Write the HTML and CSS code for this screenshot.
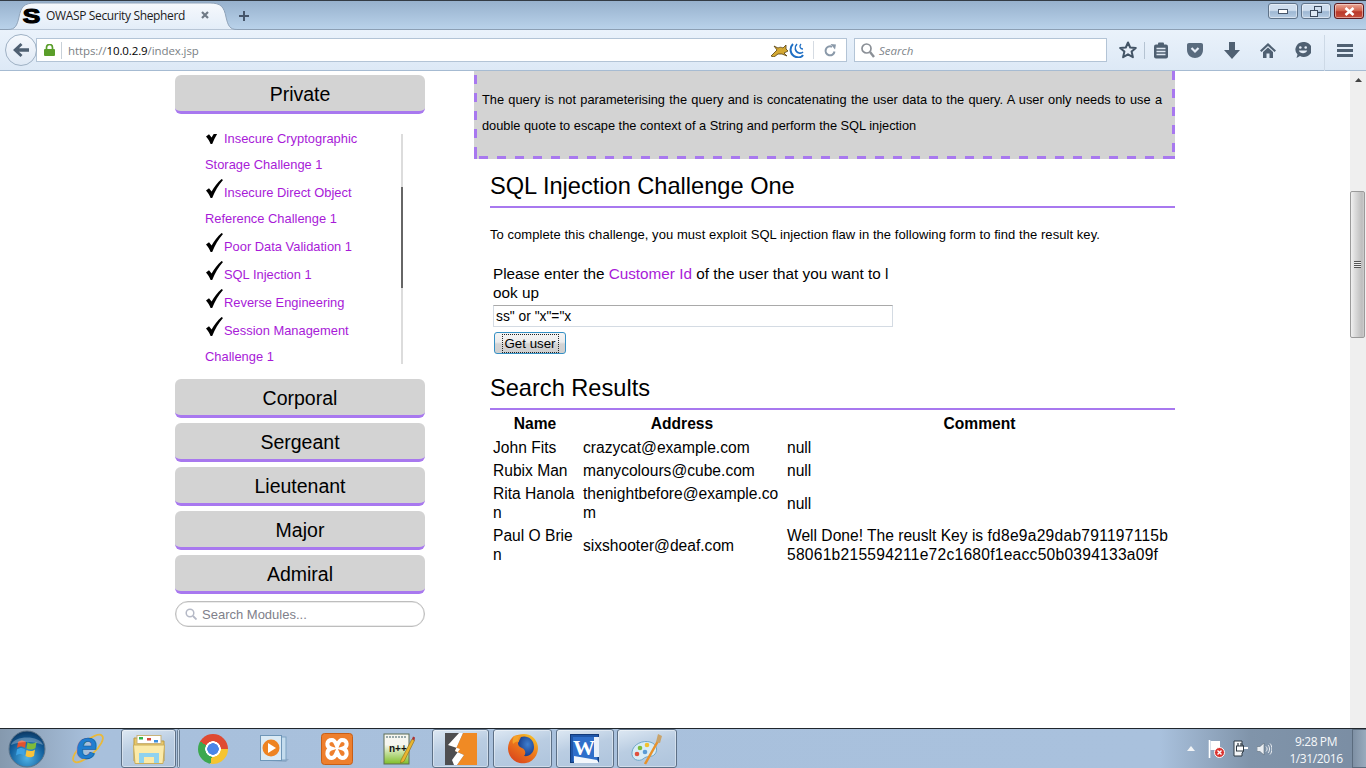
FILE: index.html
```html
<!DOCTYPE html>
<html lang="en">
<head>
<meta charset="utf-8">
<title>OWASP Security Shepherd</title>
<link rel="stylesheet" href="styles.css">
</head>
<body>
<svg class="defs" width="0" height="0" aria-hidden="true">
  <symbol id="tick" viewBox="0 0 17 19"><path d="M0 11.5 L3 9.3 L5.6 12.6 C8 8 11.5 3.5 15.6 0 L17 1 C12.5 6 9 12 6.2 19 L4.6 19 C3.6 16.5 2 13.5 0 11.5Z"/></symbol>
  <linearGradient id="tabfill" x1="0" y1="0" x2="0" y2="1"><stop offset="0" stop-color="#f6f9fd"/><stop offset="1" stop-color="#e3edf8"/></linearGradient>
</svg>
<header class="chrome">
  <div class="titlebar">
    <div class="tab">
      <svg class="tab-shape" width="230" height="28" viewBox="0 0 230 28"><path d="M0 27.5 C7 27.5 9 24 11 15 C13 5 16 1 27 1 H202 C213 1 216 5 218 15 C220 24 222 27.5 229 27.5" fill="url(#tabfill)" stroke="#8fa3b9"/></svg>
      <span class="fav">S</span>
      <span class="tab-title">OWASP Security Shepherd</span>
      <svg class="tab-x" width="8" height="8" viewBox="0 0 8 8"><path d="M1 1 L7 7 M7 1 L1 7" stroke="#6f7a86" stroke-width="2.2"/></svg>
    </div>
    <svg class="newtab" width="10" height="10" viewBox="0 0 10 10"><path d="M5 0 V10 M0 5 H10" stroke="#47566a" stroke-width="2"/></svg>
    <div class="winctl">
      <div class="wbtn"><svg width="10" height="5" viewBox="0 0 10 5"><rect x="0.5" y="0.5" width="9" height="4" fill="#fff" stroke="#47566a"/></svg></div>
      <div class="wbtn"><svg width="12" height="11" viewBox="0 0 12 11"><rect x="4.5" y="0.5" width="7" height="6" fill="none" stroke="#3c4a5c"/><rect x="0.5" y="4.5" width="7" height="6" fill="#dfe9f4" stroke="#3c4a5c"/></svg></div>
      <div class="wbtn wclose"><svg width="11" height="9" viewBox="0 0 11 9"><path d="M1.5 1 L9.5 8 M9.5 1 L1.5 8" stroke="#fff" stroke-width="2.6"/></svg></div>
    </div>
  </div>
  <div class="navbar">
    <div class="back"><svg width="16" height="14" viewBox="0 0 16 14"><path d="M7.5 0 L9.5 2 L6 5.2 H16 V8.8 H6 L9.5 12 L7.5 14 L0 7Z" fill="#4f6072"/></svg></div>
    <div class="urlbar">
      <svg class="lock" width="11" height="12" viewBox="0 0 11 12"><path d="M2.5 5 V3.5 C2.5 -0.5 8.5 -0.5 8.5 3.5 V5" fill="none" stroke="#5a9e2a" stroke-width="1.7"/><rect x="0" y="5" width="11" height="7" rx="1" fill="#5a9e2a"/></svg>
      <span class="url"><span class="url-dim">https://</span>10.0.2.9<span class="url-dim">/index.jsp</span></span>
      <svg class="tomcat" width="18" height="13" viewBox="0 0 18 13"><path d="M0 12 L6 6 L3 2 L7 4 C9 3 10 3 12 4 L15 1 L15 5 L17 7 L13 9 L16 12 L11 10 L7 10 L3 13Z" fill="#d4a832" stroke="#57400f" stroke-width="0.8"/></svg>
      <svg class="jq" width="15" height="15" viewBox="0 0 15 15"><g fill="none" stroke="#1f6fc4"><path d="M4 1 C0 5 1 12 7 14 C10 15 13 14 14 12" stroke-width="2"/><path d="M8 1 C5 4 6 9 10 10 C12 10.500 13 10 14 9" stroke-width="1.600"/><path d="M12 1 C10 3 11 6 14 6" stroke-width="1.300"/></g></svg>
      <span class="url-sep"></span>
      <svg class="reload" width="13" height="13" viewBox="0 0 13 13"><path d="M10.500 7.500 A4.500 4.500 0 1 1 8 2.800" fill="none" stroke="#8a99a9" stroke-width="2"/><path d="M6.500 0 L12 0.500 L11 5.500Z" fill="#8a99a9"/></svg>
    </div>
    <div class="searchbar">
      <svg width="14" height="15" viewBox="0 0 14 15"><circle cx="5.500" cy="5.500" r="4.500" fill="none" stroke="#8a8f96" stroke-width="1.700"/><path d="M9 9 L13 14" stroke="#8a8f96" stroke-width="2.400"/></svg>
      <span class="search-hint">Search</span>
    </div>
    <div class="tools">
      <svg class="star" width="18" height="18" viewBox="0 0 18 18"><path d="M9 1.500 L11.200 6.500 L16.800 7 L12.600 10.600 L13.900 16.200 L9 13.300 L4.100 16.200 L5.400 10.600 L1.200 7 L6.800 6.500Z" fill="#e6eef8" stroke="#435466" stroke-width="2" stroke-linejoin="round"/></svg>
      <span class="tool-sep"><svg width="16" height="17" viewBox="0 0 16 17"><rect x="1" y="2.500" width="14" height="14" rx="2" fill="#4f6072"/><rect x="5" y="0.500" width="6" height="4" rx="1" fill="#4f6072"/><path d="M3.500 6.500 H12.500 M3.500 9.500 H12.500 M3.500 12.500 H12.500" stroke="#dfe8f3" stroke-width="1.300"/></svg></span>
      <svg width="16" height="15" viewBox="0 0 16 15"><path d="M0 2 C0 0.800 0.800 0 2 0 H14 C15.200 0 16 0.800 16 2 V7 C16 12 12 15 8 15 C4 15 0 12 0 7Z" fill="#596b7e"/><path d="M4.500 5 L8 8.500 L11.500 5" fill="none" stroke="#e6eef8" stroke-width="2.200"/></svg>
      <svg width="16" height="17" viewBox="0 0 16 17"><path d="M5 0 H11 V8 H16 L8 17 L0 8 H5Z" fill="#4f6072"/></svg>
      <svg width="16" height="15" viewBox="0 0 16 15"><path d="M8 0 L16 7.500 L14.500 9 L8 3 L1.500 9 L0 7.500Z" fill="#4f6072"/><path d="M8 4.500 L13 9 V15 H9.500 V10.500 H6.500 V15 H3 V9Z" fill="#4f6072"/></svg>
      <svg width="16" height="16" viewBox="0 0 16 16"><path d="M8 0 A8 7.500 0 1 1 5 14 L1.500 16 L2.500 12.500 A8 7.500 0 0 1 8 0Z" fill="#4f6072"/><circle cx="5.300" cy="5.500" r="1.300" fill="#e6eef8"/><circle cx="10.700" cy="5.500" r="1.300" fill="#e6eef8"/><path d="M3.800 8.500 C5 12 11 12 12.200 8.500Z" fill="#e6eef8"/></svg>
      <span class="tool-menu"><span class="bars"></span></span>
    </div>
  </div>
</header>

<main class="page">
  <div class="viewport">
    <aside class="sidebar">
      <div class="rank">Private</div>
      <div class="modules">
        <ul class="module-list">
          <li><svg class="tick"><use href="#tick"/></svg><a>Insecure Cryptographic Storage Challenge 1</a></li>
          <li><svg class="tick"><use href="#tick"/></svg><a>Insecure Direct Object Reference Challenge 1</a></li>
          <li><svg class="tick"><use href="#tick"/></svg><a>Poor Data Validation 1</a></li>
          <li><svg class="tick"><use href="#tick"/></svg><a>SQL Injection 1</a></li>
          <li><svg class="tick"><use href="#tick"/></svg><a>Reverse Engineering</a></li>
          <li><svg class="tick"><use href="#tick"/></svg><a>Session Management Challenge 1</a></li>
        </ul>
        <div class="list-track"><div class="list-thumb"></div></div>
      </div>
      <div class="rank">Corporal</div>
      <div class="rank">Sergeant</div>
      <div class="rank">Lieutenant</div>
      <div class="rank">Major</div>
      <div class="rank">Admiral</div>
      <div class="module-search">
        <svg width="12" height="12" viewBox="0 0 12 12"><circle cx="5" cy="5" r="3.800" fill="none" stroke="#b5b9c6" stroke-width="1.500"/><path d="M8 8 L11.500 11.500" stroke="#b5b9c6" stroke-width="1.800"/></svg>
        <span>Search Modules...</span>
      </div>
    </aside>
    <section class="content">
      <div class="callout">
        <p>The query is not parameterising the query and is concatenating the user data to the query. A user only needs to use a double quote to escape the context of a String and perform the SQL injection</p>
      </div>
      <h2 class="title">SQL Injection Challenge One</h2>
      <p class="intro">To complete this challenge, you must exploit SQL injection flaw in the following form to find the result key.</p>
      <form class="lookup">
        <div class="prompt">Please enter the <a>Customer Id</a> of the user that you want to look up</div>
        <input class="field" type="text" value="ss&quot; or &quot;x&quot;=&quot;x">
        <button class="go" type="button"><span>Get user</span></button>
      </form>
      <h2 class="title results">Search Results</h2>
      <table class="grid">
        <colgroup><col class="c-name"><col class="c-addr"><col class="c-comm"></colgroup>
        <tr><th>Name</th><th>Address</th><th>Comment</th></tr>
        <tr><td>John Fits</td><td>crazycat@example.com</td><td>null</td></tr>
        <tr><td>Rubix Man</td><td>manycolours@cube.com</td><td>null</td></tr>
        <tr><td>Rita Hanolan</td><td>thenightbefore@example.com</td><td>null</td></tr>
        <tr><td>Paul O Brien</td><td>sixshooter@deaf.com</td><td>Well Done! The reuslt Key is <span class="key">fd8e9a29dab791197115b58061b215594211e72c1680f1eacc50b0394133a09f</span></td></tr>
      </table>
    </section>
  </div>
  <div class="vscroll">
    <svg class="vs-up" width="7" height="4" viewBox="0 0 7 4"><path d="M3.500 0 L7 4 H0Z" fill="#444"/></svg>
    <div class="vs-thumb"><span class="grip"></span></div>
  </div>
</main>

<footer class="taskbar">
  <div class="slot s-start">
    <svg width="38" height="38" viewBox="0 0 38 38">
      <defs><radialGradient id="orb" cx="0.5" cy="0.75" r="0.8"><stop offset="0" stop-color="#4fb2e6"/><stop offset="0.6" stop-color="#125f9c"/><stop offset="1" stop-color="#0b2f55"/></radialGradient></defs>
      <circle cx="19" cy="19" r="18" fill="url(#orb)" stroke="#5c7388"/>
      <path d="M10 12 C13 10 15 10 18 12 L17 18 C14 16 12 16 9 18Z" fill="#e2522e"/>
      <path d="M19.500 12 C22 14 25 14 28.500 12 L27.500 18 C24.500 20 21.500 20 18.500 18.500Z" fill="#7fbb3a"/>
      <path d="M9 19.500 C12 17.500 14 17.500 17 19.500 L16 25.500 C13 23.500 11 23.500 8 25.500Z" fill="#3da3e4"/>
      <path d="M18.500 20 C21.500 21.500 24.500 21.500 27 19.500 L26 26 C23 28 20.500 27.500 17.500 26Z" fill="#f8c33a"/>
      <path d="M3 15 C6 5 32 5 35 15 C26 11 12 11 3 15Z" fill="#fff" opacity="0.28"/>
    </svg>
  </div>
  <div class="slot s-ie">
    <svg class="ie-logo" width="34" height="33" viewBox="0 0 34 33"><ellipse cx="17" cy="16.500" rx="19" ry="7" transform="rotate(-42 17 16.500)" fill="none" stroke="#e8b93c" stroke-width="1.800"/><text x="5" y="27" class="ie-e">e</text></svg>
  </div>
  <div class="slot s-run s-exp">
    <svg width="32" height="30" viewBox="0 0 32 30"><path d="M1 4 H13 L15 7 H31 V27 H1Z" fill="#e9c766" stroke="#b99a45"/><rect x="4" y="1.500" width="24" height="8" fill="#fff" stroke="#c9b37a"/><rect x="6" y="3" width="4" height="2.500" fill="#32b44a"/><rect x="14" y="4" width="4" height="2.500" fill="#d4473a"/><rect x="21" y="6" width="4" height="2.500" fill="#3b8fe0"/><path d="M0.500 11 H31.500 L30 29.500 H2Z" fill="#fbeaa9" stroke="#c9ad5e"/><path d="M6 24 V19 H26 V29 H21 V23 H11 V29 H6Z" fill="#8fd2ef"/></svg>
  </div>
  <span class="bar-sep"></span>
  <div class="slot s-pin"><div class="chrome-logo"></div></div>
  <div class="slot s-pin">
    <svg width="30" height="28" viewBox="0 0 30 28"><path d="M8 23 L29 24 L26 27 L10 26Z" fill="#8fa9c6"/><rect x="4" y="2" width="22" height="23" fill="#c4dcee" stroke="#7fa3c3"/><rect x="0.500" y="0.500" width="21" height="25" fill="#dbeaf5" stroke="#6f96b8"/><circle cx="11" cy="13" r="8.500" fill="#ee8322"/><path d="M8 8 L16 13 L8 18Z" fill="#fff"/></svg>
  </div>
  <div class="slot s-pin">
    <svg width="32" height="32" viewBox="0 0 32 32"><rect x="0.500" y="0.500" width="31" height="31" rx="3" fill="#ee7f2d" stroke="#c75f17"/><path d="M11 7 C5 7 5 14 10 15.500 C5 17 5 25 11 25 C14 25 15 21 16 19 C17 21 18 25 21 25 C27 25 27 17 22 15.500 C27 14 27 7 21 7 C18 7 17 11 16 13 C15 11 14 7 11 7Z" fill="none" stroke="#fff" stroke-width="4"/></svg>
  </div>
  <div class="slot s-pin">
    <svg width="32" height="32" viewBox="0 0 32 32"><defs><linearGradient id="npp" x1="0" y1="0" x2="0" y2="1"><stop offset="0.35" stop-color="#f7f7f0"/><stop offset="1" stop-color="#7fbf2a"/></linearGradient></defs><rect x="1" y="1" width="25" height="30" fill="url(#npp)" stroke="#5e6f55"/><path d="M3 4 H24" stroke="#9aa" stroke-dasharray="2 1" stroke-width="2"/><text x="6" y="19" class="npp-t">n++</text><path d="M18 27 L29 6 L31.500 7.500 L21 28.500 L17.500 30Z" fill="#e9b52f" stroke="#8a6a1a" stroke-width="0.600"/><path d="M29 6 L30 3.500 L32 4.500 L31.500 7.500Z" fill="#a33"/></svg>
  </div>
  <div class="slot s-run s-bolt">
    <svg width="32" height="32" viewBox="0 0 32 32"><rect width="32" height="32" fill="#4e4e50"/><path d="M18 0 H32 V32 H12 L19 22 L10 18Z" fill="#f08a24"/><path d="M14 0 L3 12 L15 16 L7 27 L9 32 L12 32 L19 22 L10 18 L18 0Z" fill="#fff"/></svg>
  </div>
  <div class="slot s-run s-fox">
    <svg width="32" height="32" viewBox="0 0 32 32"><defs><radialGradient id="globe" cx="0.6" cy="0.4" r="0.6"><stop offset="0" stop-color="#3f7fd0"/><stop offset="1" stop-color="#1a3f8c"/></radialGradient><linearGradient id="fox" x1="0.900" y1="0" x2="0.200" y2="1"><stop offset="0" stop-color="#f8cc2a"/><stop offset="0.450" stop-color="#ef7d1c"/><stop offset="1" stop-color="#d8421c"/></linearGradient></defs><path d="M7 3 C2 7 1 12 1 16 A15 15 0 1 0 30 10 C28 5 24 1 17 1 C13 1 10 2 7 3Z" fill="url(#fox)"/><path d="M14 4 C20 2 27 6 27 14 C27 20 22 24 17 23 C19 21 19 17 15 15 C12 14 11 12 11 10 C12 8 13 6 14 4Z" fill="url(#globe)"/><path d="M7 3 C6 6 5 8 6 11 C8 9 10 8 12 9 C11 7 11 5 13 3Z" fill="#f4a12a"/></svg>
  </div>
  <div class="slot s-run s-word">
    <svg width="30" height="30" viewBox="0 0 30 30"><rect x="0.500" y="0.500" width="28" height="28" fill="#1f56a8" stroke="#123a7a"/><rect x="3" y="3" width="24" height="24" fill="#2f6fca"/><rect x="24" y="3" width="5" height="20" fill="#e8f0fa"/><text x="3" y="21" class="word-w">W</text><path d="M4 22 L27 26 L29 29 H4Z" fill="#f3f7fc"/></svg>
  </div>
  <div class="slot s-run s-paint">
    <svg width="32" height="32" viewBox="0 0 32 32"><path d="M1 19 C2 11 12 7 19 9 C26 11 27 17 24 21 C21 25 16 22 12 26 C8 29 0 27 1 19Z" fill="#d8ecf5" stroke="#6fa6c8"/><circle cx="9" cy="15" r="2.300" fill="#7dbd3c"/><circle cx="16" cy="12" r="2.300" fill="#f2c12e"/><circle cx="6" cy="21" r="2.300" fill="#e0503e"/><circle cx="14" cy="19" r="2.300" fill="#5b9bd5"/><path d="M14 31 L27 8" stroke="#e8912a" stroke-width="2.500"/><path d="M25 9 L27 1 L31 3 L29 10Z" fill="#c9a36a"/></svg>
  </div>
  <div class="tray">
    <svg width="8" height="5" viewBox="0 0 8 5"><path d="M4 0 L8 5 H0Z" fill="#f2f4f6"/></svg>
    <svg width="17" height="18" viewBox="0 0 17 18"><path d="M1.500 0 V18" stroke="#fff" stroke-width="1.600"/><path d="M2.500 1 H12 V10 H2.500Z" fill="#fff"/><circle cx="11.500" cy="12.500" r="5" fill="#d9332f" stroke="#fff"/><path d="M9.500 10.500 L13.500 14.500 M13.500 10.500 L9.500 14.500" stroke="#fff" stroke-width="1.400"/></svg>
    <svg width="15" height="17" viewBox="0 0 15 17"><path d="M1 1 H9 V5 H10 V12 L9 13 V16 H1Z" fill="#f4f6f8" stroke="#2f3a44"/><path d="M5 6 V3 M8 6 V3" stroke="#2f3a44" stroke-width="1.200"/><rect x="3.500" y="6" width="7" height="5" fill="#fff" stroke="#2f3a44"/><path d="M11 8 H15" stroke="#fff" stroke-width="2"/></svg>
    <svg width="15" height="14" viewBox="0 0 15 14"><path d="M0 4.500 H3 L7 1 V13 L3 9.500 H0Z" fill="#e9edf1" stroke="#5d6b78" stroke-width="0.600"/><path d="M9 4.500 C10.500 6 10.500 8 9 9.500 M11 3 C13 5 13 9 11 11 M13 1.500 C15.500 4 15.500 10 13 12.500" fill="none" stroke="#eef1f4" stroke-width="1"/></svg>
    <div class="clock"><span>9:28 PM</span><span>1/31/2016</span></div>
    <div class="show-desktop"></div>
  </div>
</footer>
</body>
</html>
```

FILE: styles.css
```css
* { box-sizing: border-box; }
html, body { margin: 0; height: 100%; }
body {
  display: flex;
  flex-direction: column;
  width: 1366px;
  height: 768px;
  overflow: hidden;
  background: #fff;
  font-family: "Liberation Sans", Arial, sans-serif;
  color: #000;
}
.defs { position: absolute; }

/* browser chrome */
.chrome { flex: none; height: 71px; }
.titlebar {
  display: flex;
  align-items: flex-start;
  height: 30px;
  border-top: 1px solid #333b44;
  border-bottom: 1px solid #8c9fb4;
  background: linear-gradient(#97b1cd, #b9d2ea);
}
.tab {
  position: relative;
  display: flex;
  align-items: center;
  width: 229px;
  height: 28px;
  margin-left: 8px;
  padding: 0 0 0 15px;
}
.tab-shape { position: absolute; left: 0; top: 1px; }
.fav {
  position: relative;
  width: 17px;
  font: 900 21px/1 "Liberation Sans", sans-serif;
  text-align: center;
  transform: scaleX(1.25);
  -webkit-text-stroke: 1.2px #000;
}
.tab-title {
  position: relative;
  margin-left: 6px;
  width: 155px;
  font: 12px "Open Sans", sans-serif;
  letter-spacing: -0.35px;
  color: #1c1c1c;
  white-space: nowrap;
}
.tab-x { position: relative; }
.newtab { margin: 10px 0 0 2px; }
.winctl { display: flex; gap: 3px; margin: 2px 2px 0 auto; }
.wbtn {
  display: flex;
  align-items: center;
  justify-content: center;
  width: 30px;
  height: 16px;
  border: 1px solid #5f7389;
  border-radius: 3px;
  background: linear-gradient(#cfdeee 0 45%, #9eb8d3 55%, #b8cde3);
  box-shadow: inset 0 0 0 1px rgba(255,255,255,.45);
}
.wclose {
  border-color: #5e1a1f;
  background: linear-gradient(#e59a88 0 10%, #d0604a 50%, #b9382a 55%, #c64d3a);
}
.navbar {
  display: flex;
  align-items: center;
  height: 41px;
  padding: 0 0 0 5px;
  border-bottom: 1px solid #a6bbd2;
  background: linear-gradient(#eaf2fb, #dde9f6);
}
.back {
  position: relative;
  z-index: 1;
  display: flex;
  align-items: center;
  justify-content: center;
  width: 32px;
  height: 32px;
  border: 1px solid #9fb1c4;
  border-radius: 50%;
  background: linear-gradient(#f6f9fd, #dfe9f5);
  flex: none;
}
.urlbar {
  display: flex;
  align-items: center;
  width: 811px;
  height: 24px;
  margin-left: -1px;
  padding-left: 7px;
  border: 1px solid #b3c4d6;
  background: #fff;
}
.lock { flex: none; }
.url {
  margin-left: 6px;
  padding-left: 6px;
  border-left: 1px solid #c8d0d8;
  font: 11.500px/17px "Open Sans", sans-serif;
  color: #000;
  letter-spacing: -0.1px;
}
.url-dim { color: #7b7f85; }
.tomcat { margin-left: auto; }
.url-sep { width: 1px; height: 18px; margin: 0 10px 0 9px; background: #d5dbe2; }
.reload { margin-right: 9px; }
.searchbar {
  display: flex;
  align-items: center;
  gap: 4px;
  width: 253px;
  height: 24px;
  margin-left: 7px;
  padding-left: 6px;
  border: 1px solid #b3c4d6;
  background: #fff;
}
.search-hint { font: italic 11.500px "Open Sans", sans-serif; color: #80858b; }
.tools {
  display: grid;
  grid-template-columns: 34px 33px 36px 37px 35px 36px 45px;
  align-items: center;
  justify-items: center;
  margin-left: 3px;
}
.star { justify-self: end; margin-right: 7px; }
.tool-sep { position: relative; display: flex; justify-content: center; width: 100%; }
.tool-sep::before {
  content: "";
  position: absolute;
  left: 0;
  top: 0;
  width: 1px;
  height: 17px;
  background: #b5c3d2;
}
.tool-menu { position: relative; display: flex; justify-content: center; width: 100%; padding-left: 3px; }
.tool-menu::before {
  content: "";
  position: absolute;
  left: 3px;
  top: -9px;
  width: 1px;
  height: 36px;
  background: #cdd9e6;
}
.bars {
  width: 16px;
  height: 13px;
  background: linear-gradient(#4f6072 0 3px, transparent 3px 5px, #4f6072 5px 8px, transparent 8px 10px, #4f6072 10px);
}

/* page */
.page { flex: 1; display: flex; min-height: 0; }
.viewport { flex: 1; display: flex; padding-left: 175px; overflow: hidden; }
.sidebar { flex: none; width: 250px; padding-top: 4px; }
.rank {
  height: 39px;
  margin-bottom: 5px;
  padding-top: 1px;
  border-bottom: 3px solid #a878ef;
  border-radius: 6px;
  background: #d3d3d3;
  font-size: 19.500px;
  line-height: 37px;
  text-align: center;
}
.modules {
  position: relative;
  height: 230px;
  margin: 20px 0 15px;
  overflow: hidden;
}
.module-list {
  width: 190px;
  margin: -10px 0 0 30px;
  padding: 0;
  list-style: none;
  font-size: 12.900px;
  line-height: 26px;
  color: #a81ad8;
}
.tick {
  display: inline-block;
  width: 17px;
  height: 19px;
  margin: 1px 1px 8px 1px;
  vertical-align: bottom;
  fill: #000;
}
.list-track { position: absolute; left: 226px; top: 0; width: 2px; height: 230px; background: #dcdcdc; }
.list-thumb { height: 101px; margin-top: 53px; background: #666; }
.module-search {
  display: flex;
  align-items: center;
  gap: 5px;
  height: 26px;
  margin-top: 7px;
  padding-left: 9px;
  border: 1px solid #bdbdbd;
  border-radius: 13px;
  box-shadow: inset 0 0 0 0.5px #d8d8d8;
  font-size: 13px;
  color: #80808a;
}
.content { flex: none; width: 701px; margin-left: 49px; }
.callout {
  height: 88px;
  padding: 16px 13px 0 8px;
  background-color: #d3d3d3;
  background-image:
    linear-gradient(#a878ef, #a878ef),
    linear-gradient(#a878ef, #a878ef),
    linear-gradient(#a878ef 9px, transparent 9px),
    linear-gradient(#a878ef 9px, transparent 9px),
    linear-gradient(90deg, #a878ef 9px, transparent 9px);
  background-size: 3px 3px, 3px 3px, 3px 18px, 3px 18px, 18px 3px;
  background-position: 0 100%, 100% 100%, 0 4px, 100% 0, 5px 100%;
  background-repeat: no-repeat, no-repeat, repeat-y, repeat-y, repeat-x;
}
.callout p {
  margin: 0;
  font-size: 12.800px;
  line-height: 26px;
  text-align: justify;
}
.title {
  margin: 13px 0 0 16px;
  padding-bottom: 6px;
  border-bottom: 2px solid #a878ef;
  font-size: 23.600px;
  font-weight: 400;
  line-height: 28px;
}
.intro { margin: 20px 0 0 16px; font-size: 13px; letter-spacing: 0.06px; line-height: 14px; }
.lookup { display: flex; flex-direction: column; align-items: flex-start; margin: 22px 0 0 19px; }
.prompt { width: 400px; font-size: 15.300px; line-height: 19px; word-break: break-all; }
.prompt a { color: #a81ad8; }
.field {
  width: 400px;
  height: 22px;
  margin-top: 3px;
  padding: 0 2px;
  border: 1px solid #d4dbe3;
  border-top-color: #a9a9a9;
  font: 13.800px "Liberation Sans", sans-serif;
}
.go {
  width: 72px;
  height: 22px;
  margin: 5px 0 0 1px;
  padding: 0;
  border: 1px solid #3590c4;
  border-radius: 3px;
  background: linear-gradient(#f4f4f4, #ececec 45%, #d4d4d4 55%, #cfcfcf);
  font: 13.300px "Liberation Sans", sans-serif;
  color: #000;
}
.go span { padding: 0 1px; outline: 1px dotted #222; outline-offset: 1px; }
.results { margin-top: 20px; }
.grid {
  width: 685px;
  margin: 2px 0 0 16px;
  table-layout: fixed;
  border-collapse: collapse;
  font-size: 15.600px;
  line-height: 19px;
}
.c-name { width: 90px; }
.c-addr { width: 204px; }
.c-comm { width: 391px; }
.grid th, .grid td { padding: 2px 3px; word-break: break-all; }
.grid th { padding-bottom: 3px; text-align: center; }
.grid td:last-child { padding-right: 5px; }
.key { letter-spacing: 0.25px; }
.vscroll { position: relative; flex: none; width: 16px; background: #efefef; }
.vs-up { position: absolute; left: 5px; top: 7px; }
.vs-thumb {
  display: flex;
  align-items: center;
  justify-content: center;
  width: 15px;
  height: 147px;
  margin-top: 120px;
  border: 1px solid #9a9a9a;
  border-radius: 2px;
  background: linear-gradient(90deg, #f0f0f0, #d9d9d9 35%, #bdbdbd 85%, #cfcfcf);
}
.grip {
  width: 7px;
  height: 7px;
  background: repeating-linear-gradient(#555 0 1px, #eee 1px 2px);
}

/* taskbar */
.taskbar {
  flex: none;
  display: flex;
  height: 40px;
  border-top: 1px solid #20262c;
  background: linear-gradient(90deg, #8599ae 0, #a8c0dc 90px, #a9c1dd 1160px, #8094aa 1250px, #7a8da3 100%);
}
.slot { display: flex; flex: none; align-items: center; justify-content: center; height: 39px; }
.s-start { width: 54px; }
.s-ie { width: 67px; }
.ie-logo { overflow: visible; }
.s-run {
  border: 1px solid #5d7086;
  border-radius: 3px;
  background: linear-gradient(165deg, #dde8f3, #bacde2 45%, #aec4dc);
  box-shadow: inset 0 0 0 1px rgba(255,255,255,.4);
}
.s-exp { width: 55px; }
.bar-sep { width: 3px; margin: 0 2px 0 1px; border: 1px solid #6a7f95; border-radius: 2px; background: #c5d5e6; }
.s-pin { width: 62px; }
.s-bolt { width: 57px; margin-left: 2px; }
.s-fox { width: 59px; margin-left: 4px; }
.s-word { width: 58px; margin-left: 4px; }
.s-paint { width: 60px; margin-left: 3px; }
.chrome-logo {
  width: 30px;
  height: 30px;
  border-radius: 50%;
  background:
    radial-gradient(circle, #4a86e8 0 5.500px, #fff 6px 7.500px, transparent 8px),
    conic-gradient(#df4a32 0 90deg, #f5c42f 90deg 190deg, #3da84f 190deg 300deg, #df4a32 300deg);
}
.ie-e { font: italic 700 38px "Liberation Sans", sans-serif; fill: #1f7ed0; stroke: #0d4f92; stroke-width: 0.500px; }
.npp-t { font: 700 10px "Liberation Sans", sans-serif; fill: #111; }
.word-w { font: 700 22px "Liberation Serif", serif; fill: #fff; }
.tray { display: flex; align-items: center; margin-left: auto; height: 39px; }
.tray svg:nth-child(1) { margin-right: 13px; }
.tray svg:nth-child(2) { margin-right: 8px; }
.tray svg:nth-child(3) { margin-right: 9px; }
.clock {
  display: flex;
  flex-direction: column;
  align-items: center;
  width: 72px;
  margin-left: 8px;
  padding-top: 2px;
  font: 12px/17px "Open Sans", sans-serif;
  color: #f6f8fa;
  letter-spacing: -0.4px;
}
.show-desktop {
  width: 14px;
  height: 39px;
  border: 1px solid #5b6c7e;
  border-right: 0;
  background: linear-gradient(90deg, #7e90a4, #9aabbd);
}
```
